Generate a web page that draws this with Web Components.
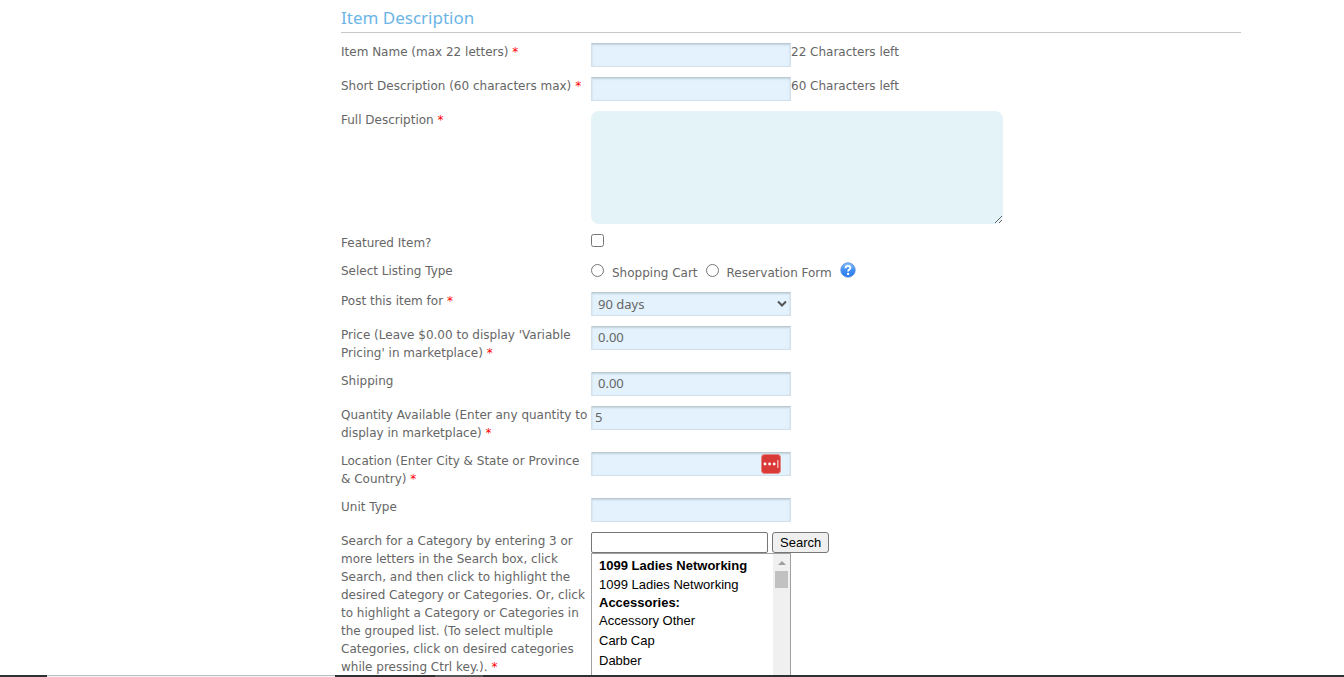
<!DOCTYPE html>
<html lang="en">
<head>
<meta charset="utf-8">
<title>Item Description</title>
<style>
  body {
    margin: 0;
    background: #fff;
    color: #666;
    font-family: "DejaVu Sans", Verdana, sans-serif;
    font-size: 12px;
    line-height: 18px;
  }
</style>
</head>
<body>
<item-page></item-page>
<page-edge></page-edge>

<script>
class SectionHeading extends HTMLElement {
  constructor() {
    super();
    this.attachShadow({ mode: 'open' });
    this.shadowRoot.innerHTML = `
      <style>
        :host {
          display: block;
          border-bottom: 1px solid #c8c8c8;
          margin-bottom: 10px;
        }
        h2 {
          margin: 0;
          padding: 6px 0 2px;
          color: #6cb5e6;
          font-family: "Noto Sans", "Trebuchet MS", sans-serif;
          font-size: 17px;
          font-weight: 400;
          line-height: 24px;
        }
      </style>
      <h2><slot></slot></h2>`;
  }
}
customElements.define('section-heading', SectionHeading);

// One line of the form: label on the left, control on the right
class FormRow extends HTMLElement {
  constructor() {
    super();
    this.attachShadow({ mode: 'open' });
    this.shadowRoot.innerHTML = `
      <style>
        :host {
          display: grid;
          grid-template-columns: 250px 1fr;
          align-items: start;
        }
        .star {
          display: none;
          color: #f00;
        }
        :host([required]) .star {
          display: inline;
        }
        .control {
          display: flex;
          align-items: flex-start;
        }
      </style>
      <div><slot name="label"></slot> <span class="star">*</span></div>
      <div class="control"><slot></slot></div>`;
  }
}
customElements.define('form-row', FormRow);

class HelpIcon extends HTMLElement {
  constructor() {
    super();
    this.attachShadow({ mode: 'open' });
    this.shadowRoot.innerHTML = `
      <style>
        :host { display: block; height: 16px; }
        svg { display: block; }
      </style>
      <svg width="16" height="16" viewBox="0 0 16 16" role="img" aria-label="Help">
        <defs>
          <linearGradient id="ball" x1="0" y1="0" x2="0" y2="1">
            <stop offset="0" stop-color="#8fc4fb"/>
            <stop offset=".5" stop-color="#3f8ff5"/>
            <stop offset="1" stop-color="#2a78ee"/>
          </linearGradient>
        </defs>
        <circle cx="8" cy="8" r="7.2" fill="url(#ball)" stroke="#4a86d8" stroke-width=".8"/>
        <path d="M5.6 6.2C5.6 3.2 10.6 3.2 10.4 6C10.3 7.6 8.1 7.6 8.1 9.4" fill="none" stroke="#fff" stroke-width="1.9"/>
        <circle cx="8.1" cy="11.9" r="1.2" fill="#fff"/>
      </svg>`;
  }
}
customElements.define('help-icon', HelpIcon);

// Password manager badge that sits inside a text box
class FillBadge extends HTMLElement {
  constructor() {
    super();
    this.attachShadow({ mode: 'open' });
    this.shadowRoot.innerHTML = `
      <style>
        :host { display: block; }
        svg { display: block; }
      </style>
      <svg width="20" height="20" viewBox="0 0 20 20" aria-hidden="true">
        <rect x=".5" y=".5" width="19" height="19" rx="3" fill="#d93a38" stroke="#e58482"/>
        <circle cx="4" cy="10" r="1.4" fill="#fff"/>
        <circle cx="8.6" cy="10" r="1.4" fill="#fff"/>
        <circle cx="13.2" cy="10" r="1.4" fill="#fff"/>
        <rect x="16" y="6" width="1.6" height="8" fill="#f0a3a1"/>
      </svg>`;
  }
}
customElements.define('fill-badge', FillBadge);

class CategoryPicker extends HTMLElement {
  constructor() {
    super();
    this.attachShadow({ mode: 'open' });
    this.shadowRoot.innerHTML = `
      <style>
        :host {
          display: block;
          color: #000;
          font-family: "Liberation Sans", Arial, sans-serif;
          font-size: 13px;
        }
        .search {
          display: flex;
          gap: 4px;
        }
        input, button {
          box-sizing: border-box;
          height: 21px;
          margin: 0;
          font: inherit;
          line-height: 15px;
          border: 1px solid #767676;
          border-radius: 2px;
        }
        input {
          width: 177px;
          padding: 1px 2px;
        }
        button {
          padding: 1px 7px;
          background: #efefef;
          color: #000;
          border-radius: 3px;
        }
        .list {
          display: flex;
          box-sizing: border-box;
          width: 200px;
          height: 124px;
          border: 1px solid #a0a0a0;
        }
        select {
          flex: 1;
          min-width: 0;
          height: 100%;
          box-sizing: border-box;
          margin: 0;
          padding: 4px 0 0 5px;
          border: 0;
          outline: 0;
          background: #fff;
          color: #000;
          font: inherit;
          scrollbar-width: none;
        }
        optgroup {
          font-weight: 700;
        }
        option {
          box-sizing: border-box;
          height: 20px;
          min-height: 20px;
          padding: 2px 0 0 2px;
          font-weight: 400;
        }
        option::before { content: none; }
        .bar {
          width: 17px;
          background: #f0f0f0;
        }
        .up {
          width: 0;
          margin: 7px auto 6px;
          border: 4px solid transparent;
          border-top: 0;
          border-bottom-color: #a0a0a0;
        }
        .thumb {
          width: 13px;
          height: 17px;
          margin: 0 auto;
          background: #c1c1c1;
        }
      </style>
      <div class="search">
        <input type="text" aria-label="Search for a Category">
        <button type="button">Search</button>
      </div>
      <div class="list">
        <select multiple aria-label="Categories">
          <optgroup label="1099 Ladies Networking">
            <option>1099 Ladies Networking</option>
          </optgroup>
          <optgroup label="Accessories:">
            <option>Accessory Other</option>
            <option>Carb Cap</option>
            <option>Dabber</option>
          </optgroup>
        </select>
        <div class="bar"><div class="up"></div><div class="thumb"></div></div>
      </div>`;
  }
}
customElements.define('category-picker', CategoryPicker);

class ItemPage extends HTMLElement {
  constructor() {
    super();
    this.attachShadow({ mode: 'open' });
    this.shadowRoot.innerHTML = `
      <style>
        :host {
          display: block;
          box-sizing: border-box;
          max-width: 1140px;
          margin: 0 auto;
          padding: 0 1px 0 239px;
        }
        form {
          display: grid;
          gap: 10px;
        }
        .box {
          box-sizing: border-box;
          width: 200px;
          height: 24px;
          margin: 0;
          padding: 0 3px 2px;
          border: 1px solid #d3e1ec;
          border-top-color: #b9c8d2;
          border-radius: 0;
          outline: 0;
          background-color: #e3f2fc;
          box-shadow: inset 0 1px 2px #c3d2dc;
          color: #666;
          font-family: "Noto Sans", Tahoma, sans-serif;
          font-size: 13px;
        }
        .money { padding-left: 6px; }
        select.box {
          appearance: none;
          padding: 0 6px;
        }
        .drop, .filled {
          display: grid;
          align-items: center;
        }
        .drop > *, .filled > * { grid-area: 1 / 1; }
        .drop svg {
          justify-self: end;
          margin-right: 3px;
          pointer-events: none;
        }
        .filled fill-badge {
          justify-self: end;
          margin-right: 10px;
        }
        textarea {
          box-sizing: border-box;
          width: 412px;
          height: 113px;
          margin: 0;
          padding: 6px;
          border: 0;
          border-radius: 8px;
          outline: 0;
          background: #e3f3f8;
          font: inherit;
        }
        .tick {
          width: 13px;
          height: 13px;
          margin: 0;
        }
        .types {
          display: flex;
          align-items: center;
          height: 20px;
        }
        .types .tick { margin-right: 8px; margin-bottom: 3px; }
        .types label { margin-right: 8px; padding-top: 2px; }
        .types help-icon { margin-bottom: 4px; }
      </style>
      <section-heading>Item Description</section-heading>
      <form>
        <form-row required>
          <label slot="label" for="name">Item Name (max 22 letters)</label>
          <input class="box" id="name" type="text" maxlength="22">
          <span>22 Characters left</span>
        </form-row>
        <form-row required>
          <label slot="label" for="short">Short Description (60 characters max)</label>
          <input class="box" id="short" type="text" maxlength="60">
          <span>60 Characters left</span>
        </form-row>
        <form-row required>
          <label slot="label" for="full">Full Description</label>
          <textarea id="full"></textarea>
        </form-row>
        <form-row>
          <label slot="label" for="featured">Featured Item?</label>
          <input class="tick" id="featured" type="checkbox">
        </form-row>
        <form-row>
          <span slot="label">Select Listing Type</span>
          <div class="types">
            <input class="tick" id="cart" type="radio" name="listing">
            <label for="cart">Shopping Cart</label>
            <input class="tick" id="reservation" type="radio" name="listing">
            <label for="reservation">Reservation Form</label>
            <help-icon></help-icon>
          </div>
        </form-row>
        <form-row required>
          <label slot="label" for="days">Post this item for</label>
          <div class="drop">
            <select class="box" id="days"><option>90 days</option></select>
            <svg width="12" height="8" viewBox="0 0 12 8" aria-hidden="true">
              <path d="M2 1.5L6 5.5L10 1.5" fill="none" stroke="#555" stroke-width="2"/>
            </svg>
          </div>
        </form-row>
        <form-row required>
          <label slot="label" for="price">Price (Leave $0.00 to display 'Variable Pricing' in marketplace)</label>
          <input class="box money" id="price" type="text" value="0.00">
        </form-row>
        <form-row>
          <label slot="label" for="shipping">Shipping</label>
          <input class="box money" id="shipping" type="text" value="0.00">
        </form-row>
        <form-row required>
          <label slot="label" for="quantity">Quantity Available (Enter any quantity to display in marketplace)</label>
          <input class="box" id="quantity" type="text" value="5">
        </form-row>
        <form-row required>
          <label slot="label" for="location">Location (Enter City &amp; State or Province &amp; Country)</label>
          <div class="filled">
            <input class="box" id="location" type="text">
            <fill-badge></fill-badge>
          </div>
        </form-row>
        <form-row>
          <label slot="label" for="unit">Unit Type</label>
          <input class="box" id="unit" type="text">
        </form-row>
        <form-row required>
          <span slot="label">Search for a Category by entering 3 or more letters in the Search box, click Search, and then click to highlight the desired Category or Categories. Or, click to highlight a Category or Categories in the grouped list. (To select multiple Categories, click on desired categories while pressing Ctrl key.).</span>
          <category-picker></category-picker>
        </form-row>
      </form>`;
  }
}
customElements.define('item-page', ItemPage);

// Thin strip along the bottom of the window
class PageEdge extends HTMLElement {
  constructor() {
    super();
    this.attachShadow({ mode: 'open' });
    this.shadowRoot.innerHTML = `
      <style>
        :host {
          position: fixed;
          bottom: 0;
          left: 0;
          right: 0;
          display: flex;
          height: 2px;
          background: #303030;
        }
        .light {
          box-sizing: border-box;
          width: 288px;
          margin-left: 47px;
          border-top: 1px solid #bcbcbc;
          background: #f4f4f4;
        }
        .grey {
          width: 48px;
          margin-left: 100px;
          background: #555;
        }
      </style>
      <div class="light"></div>
      <div class="grey"></div>`;
  }
}
customElements.define('page-edge', PageEdge);
</script>
</body>
</html>
